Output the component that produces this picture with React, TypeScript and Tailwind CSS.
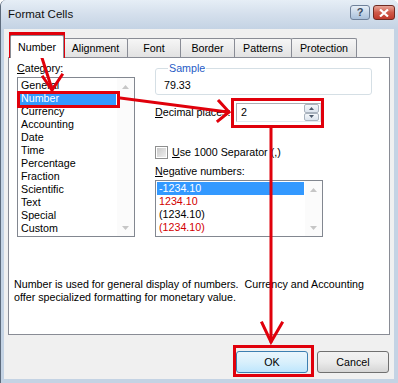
import React from "react";

const U = ({ c }: { c: string }) => <span className="underline underline-offset-[1px]">{c}</span>;

function ScrollCol() {
  return (
    <div className="w-[17px] flex flex-col justify-between bg-[#fbfbfb]">
      <div className="h-[17px] flex items-center justify-center">
        <svg width="7" height="4" viewBox="0 0 7 4"><path d="M0 4 L3.5 0 L7 4 Z" fill="#c6c6c6" /></svg>
      </div>
      <div className="h-[17px] flex items-center justify-center">
        <svg width="7" height="4" viewBox="0 0 7 4"><path d="M0 0 L3.5 4 L7 0 Z" fill="#c6c6c6" /></svg>
      </div>
    </div>
  );
}

export default function App() {
  const cats = ["General", "Number", "Currency", "Accounting", "Date", "Time", "Percentage", "Fraction", "Scientific", "Text", "Special", "Custom"];
  const negs: { t: string; red: boolean }[] = [
    { t: "-1234.10", red: false },
    { t: "1234.10", red: true },
    { t: "(1234.10)", red: false },
    { t: "(1234.10)", red: true },
  ];
  const tabs: { t: string; w: number }[] = [
    { t: "Alignment", w: 65 },
    { t: "Font", w: 54 },
    { t: "Border", w: 55 },
    { t: "Patterns", w: 58 },
    { t: "Protection", w: 66 },
  ];
  return (
    <div className="relative w-[398px] h-[383px] overflow-hidden bg-[#c4d3e4] rounded-t-[6px] border-l border-[#5d6b7c] font-['Liberation_Sans',Arial,sans-serif] text-[10.7px] leading-[13px] text-black">
      {/* title bar */}
      <div className="h-[29px] flex items-center pl-[7px] pr-[3px] bg-gradient-to-b from-[#e6eef6] via-[#d4dfec] to-[#c4d3e4]">
        <span className="text-[11.5px] text-[#101010]">Format Cells</span>
        <div className="ml-auto flex items-center gap-[3px] mt-[-4px]">
          <div className="w-[20px] h-[15px] rounded-[3px] border border-[#6f819a] bg-gradient-to-b from-[#e6eef7] to-[#a9c0da] flex items-center justify-center text-[11px] font-bold text-[#3a4a5e]">?</div>
          <div className="w-[22px] h-[15px] rounded-[3px] border border-[#6e2b22] bg-gradient-to-b from-[#e7a599] via-[#cf5a4a] to-[#c0392b] flex items-center justify-center">
            <svg width="10" height="8" viewBox="0 0 10 8"><path d="M1 0.5 L9 7.5 M9 0.5 L1 7.5" stroke="#ffffff" strokeWidth="2.2" /></svg>
          </div>
        </div>
      </div>

      {/* body */}
      <div className="ml-[3px] w-[390px] h-[350px] bg-[#f0f0f0] flex flex-col">
        {/* tabs */}
        <div className="pt-[6px] pl-[6px] flex items-end">
          <div className="relative z-10 -mb-px w-[54px] h-[23px] bg-white border border-b-0 border-[#898c95] rounded-t-[2px] flex items-center justify-center">
            Number
          </div>
          {tabs.map((t) => (
            <div
              key={t.t}
              style={{ width: t.w }}
              className="-ml-px first:ml-0 h-[19px] bg-gradient-to-b from-[#f6f6f6] to-[#e2e2e2] border border-b-0 border-[#898c95] rounded-t-[2px] flex items-center justify-center pt-[1px]"
            >
              {t.t}
            </div>
          ))}
        </div>

        {/* panel */}
        <div className="ml-[4px] w-[382px] h-[278px] bg-white border border-[#898c95] flex flex-col">
          <div className="flex gap-[20px]">
            {/* left column */}
            <div className="ml-[8px] pt-[4px] w-[118px] flex flex-col">
              <div><U c="C" />ategory:</div>
              <div className="mt-[2px] h-[160px] border border-[#828790] flex">
                <div className="flex-1 p-[1px] flex flex-col">
                  {cats.map((c) => (
                    <div key={c} className={"h-[13px] pl-[2px] " + (c === "Number" ? "bg-[#3399ff] text-white" : "")}>{c}</div>
                  ))}
                </div>
                <ScrollCol />
              </div>
            </div>

            {/* right column */}
            <div className="pt-[4px] flex flex-col">
              <fieldset className="w-[217px] border border-[#d5dfe5] rounded-[3px] pl-[8px] pt-[4px] pb-[2px]">
                <legend className="ml-[4px] px-[1px] text-[#1f5bc6]">Sample</legend>
                <div>79.33</div>
              </fieldset>

              <div className="mt-[8px] flex items-center">
                <div className="w-[81px]"><U c="D" />ecimal places:</div>
                <div className="w-[85px] h-[19px] border border-[#abadb3] border-b-[#e3e9ef] border-r-[#dbdfe6] flex items-center">
                  <span className="pl-[4px] flex-1">2</span>
                  <div className="w-[15px] h-[17px] flex flex-col mr-[1px]">
                    <div className="flex-1 border border-[#a9b3be] rounded-[2px] bg-gradient-to-b from-[#f4f7fa] to-[#dde5ee] flex items-center justify-center">
                      <svg width="5" height="3" viewBox="0 0 5 3"><path d="M0 3 L2.5 0 L5 3 Z" fill="#4d5b6d" /></svg>
                    </div>
                    <div className="flex-1 border border-[#a9b3be] rounded-[2px] bg-gradient-to-b from-[#f4f7fa] to-[#dde5ee] flex items-center justify-center">
                      <svg width="5" height="3" viewBox="0 0 5 3"><path d="M0 0 L2.5 3 L5 0 Z" fill="#4d5b6d" /></svg>
                    </div>
                  </div>
                </div>
              </div>

              <div className="mt-[24px] flex items-center h-[13px]">
                <div className="w-[13px] h-[13px] border border-[#8e8f8f] bg-white p-[1px]">
                  <div className="w-full h-full bg-gradient-to-br from-[#c9c9c9] to-[#efefef]" />
                </div>
                <div className="ml-[4px]"><U c="U" />se 1000 Separator (,)</div>
              </div>

              <div className="mt-[6px]"><U c="N" />egative numbers:</div>
              <div className="mt-[2px] w-[168px] h-[57px] border border-[#828790] flex">
                <div className="flex-1 p-[1px] flex flex-col">
                  {negs.map((n, i) => (
                    <div
                      key={i}
                      className={"h-[13px] pl-[2px] " + (i === 0 ? "bg-[#3399ff] text-white" : n.red ? "text-[#d20000]" : "")}
                    >
                      {n.t}
                    </div>
                  ))}
                </div>
                <ScrollCol />
              </div>
            </div>
          </div>

          <div className="mt-[41px] ml-[5px] whitespace-pre">
            <div>Number is used for general display of numbers.  Currency and Accounting</div>
            <div>offer specialized formatting for monetary value.</div>
          </div>
        </div>

        {/* buttons */}
        <div className="mt-[16px] flex justify-end gap-[9px] pr-[5px]">
          <div className="w-[72px] h-[22px] rounded-[3px] border border-[#3c7fb1] bg-gradient-to-b from-[#eaf6fd] via-[#d9f0fc] to-[#bee6fd] flex items-center justify-center">OK</div>
          <div className="w-[72px] h-[22px] rounded-[3px] border border-[#707070] bg-gradient-to-b from-[#f2f2f2] via-[#ebebeb] to-[#d5d5d5] flex items-center justify-center">Cancel</div>
        </div>
      </div>

      {/* red annotations */}
      <div className="absolute left-[8px] top-[32px] w-[56px] h-[26px] border-[3px] border-[#e0000b]" />
      <div className="absolute left-[16px] top-[91px] w-[103px] h-[17px] border-[3px] border-[#e0000b]" />
      <div className="absolute left-[230px] top-[98px] w-[93px] h-[30px] border-[3px] border-[#e0000b]" />
      <div className="absolute left-[232px] top-[345px] w-[81px] h-[32px] border-[3px] border-[#e0000b]" />
      <svg className="absolute left-0 top-0 pointer-events-none" width="398" height="383" viewBox="0 0 398 383">
        <g stroke="#e0000b" strokeWidth="3" fill="none" strokeLinecap="square">
          <path d="M41 58 L51 89" />
          <path d="M42 77 L51 90 L61 75" />
          <path d="M119 98 L227 112" />
          <path d="M218 101 L228 112 L217 121" />
          <path d="M270 128 L270 341" />
          <path d="M261 323 L270 342 L281 323" />
        </g>
      </svg>
    </div>
  );
}
